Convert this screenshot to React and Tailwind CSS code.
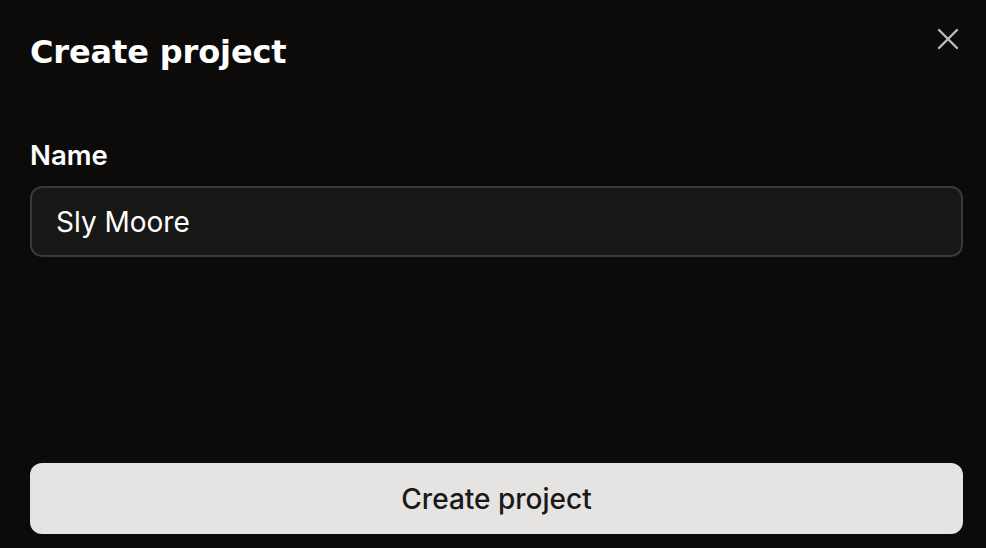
import React from 'react'

const CloseIcon = () => (
    <svg width="22" height="22" viewBox="0 0 22 22" fill="none" stroke="currentColor" strokeWidth="2.4" strokeLinecap="round">
        <path d="M2 2 L20 20 M20 2 L2 20" />
    </svg>
)

const App = () => {
    return (
        <div className="w-[986px] h-[548px] bg-[#0c0b0a] flex flex-col pl-[30px] pr-[23px] pt-[30px] pb-[14px] font-['Inter',sans-serif] text-white">
            <div className="flex items-start justify-between">
                <h1 className="font-['DejaVu_Sans',sans-serif] text-[32px] leading-[44px] font-bold tracking-[-0.004em]">Create project</h1>
                <button className="text-[#bdbcba] mt-[-2px] mr-[4px]">
                    <CloseIcon />
                </button>
            </div>

            <label className="mt-[64px] text-[27.5px] leading-[34px] font-semibold">Name</label>
            <div className="mt-[14px] h-[71px] rounded-[12px] border-2 border-[#3a3938] bg-[#181817] flex items-center px-[24px]">
                <span className="text-[28px] leading-none font-normal">Sly Moore</span>
            </div>

            <div className="flex-1" />

            <button className="h-[71px] rounded-[12px] bg-[#e5e4e2] text-[#1a1918] text-[28px] font-medium flex items-center justify-center">
                Create project
            </button>
        </div>
    )
}

export default App
